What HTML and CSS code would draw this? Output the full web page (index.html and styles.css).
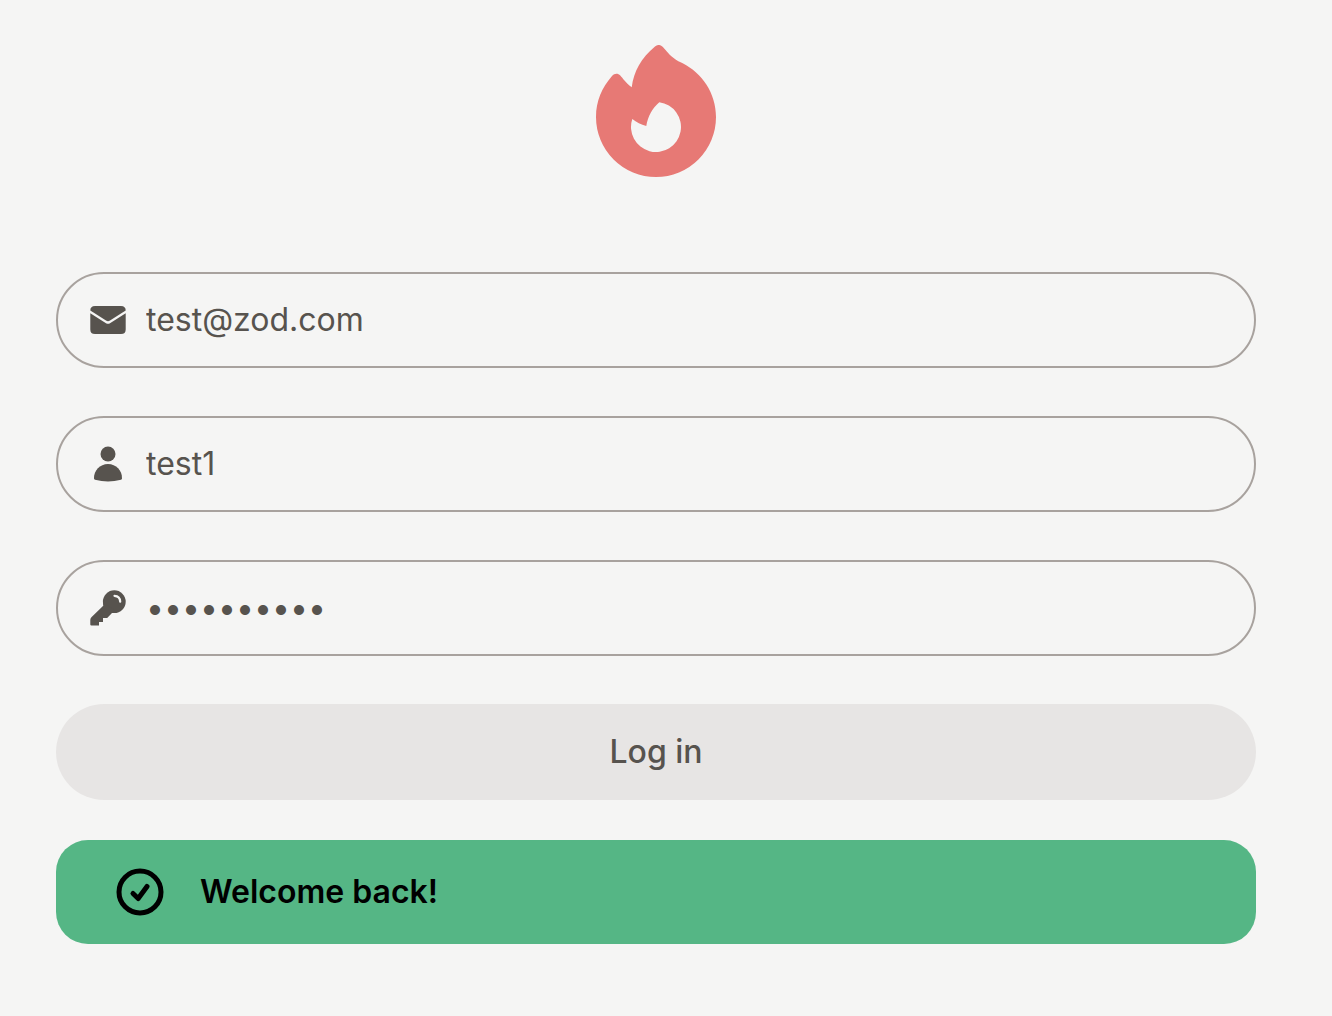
FILE: index.html
```html
<!DOCTYPE html>
<html lang="en">
<head>
  <meta charset="utf-8">
  <meta name="viewport" content="width=device-width, initial-scale=1">
  <title>Log in</title>
  <link rel="stylesheet" href="styles.css">
</head>
<body>
  <main class="page">
    <svg class="logo" viewBox="0 0 120 132" aria-hidden="true">
      <path fill-rule="evenodd" d="M59 1.6C61.5-.6 64-.5 66.300 1.400C69 4 72 8.500 77.300 12.700C81 15.600 84 17 86.700 18.200C106 28 120 48 120 72A60 60 0 0 1 0 72C0 56 6 42.500 16 31C18.500 28 22 28 24.300 30.500C27 33.500 29 37 35.700 42.300C38 26 45 13.500 59 1.600ZM36.300 74A25 25 0 1 0 63.300 57.200C56 63.500 51.800 71.500 50.300 81C45 79.500 40.500 77.300 36.300 74Z"/>
    </svg>

    <form class="form">
      <label class="field">
        <svg class="field-icon" viewBox="0 0 40 40" aria-hidden="true">
          <path d="M7 6H33Q37.700 6 37.700 10.500L22 20.600Q20 21.800 18 20.600L2.300 10.500Q2.300 6 7 6Z"/>
          <path d="M2.300 13.300L18 23.200Q20 24.400 22 23.200L37.700 13.300V29.500Q37.700 34 33 34H7Q2.300 34 2.300 29.500Z"/>
        </svg>
        <input class="field-input" type="email" aria-label="Email" value="test@zod.com">
      </label>
      <label class="field">
        <svg class="field-icon" viewBox="0 0 40 40" aria-hidden="true">
          <circle cx="20" cy="10" r="7.500"/>
          <path d="M6 34.500C5.700 26.500 12 20 20 20S34.300 26.500 34 34.500Q33.900 35.300 33 35.700Q20 39.300 7 35.700Q6.100 35.300 6 34.500Z"/>
        </svg>
        <input class="field-input" type="text" aria-label="Username" value="test1">
      </label>
      <label class="field">
        <svg class="field-icon" viewBox="0 0 40 40" aria-hidden="true">
          <circle cx="26.300" cy="13.700" r="11.400"/>
          <path d="M15 15L15.500 17.500L3.400 29.200Q2.300 30.300 2.300 32V36.500Q2.300 37.600 3.400 37.600H11V34H15V30H19.200L24 25L27 22Z"/>
          <path class="key-glint" d="M26.500 7.900Q32 8.200 32.200 13.700"/>
        </svg>
        <input class="field-input" type="password" aria-label="Password" value="abcdefghij">
      </label>
      <button class="submit" type="button">Log in</button>
    </form>

    <div class="alert" role="status">
      <svg class="alert-icon" viewBox="0 0 48 48" aria-hidden="true">
        <circle cx="24" cy="24" r="21"/>
        <path d="M17 25.500L22.200 30.500L31 18.500"/>
      </svg>
      <span>Welcome back!</span>
    </div>
  </main>
</body>
</html>
```
FILE: styles.css
```css
*,
*::before,
*::after {
  box-sizing: border-box;
}

body {
  margin: 0;
  background: #f5f5f4;
  color: #57534e;
  font-family: Inter, "Liberation Sans", sans-serif;
  font-size: 32px;
  line-height: 40px;
}

.page {
  display: flex;
  flex-direction: column;
  padding: 45px 76px 72px 56px;
}

.logo {
  align-self: center;
  width: 120px;
  height: 132px;
  margin-bottom: 95px;
  fill: #e77975;
}

.form {
  display: flex;
  flex-direction: column;
  gap: 48px;
}

.field {
  display: flex;
  align-items: center;
  gap: 18px;
  height: 96px;
  padding: 0 30px;
  border: 2px solid #a8a29e;
  border-radius: 48px;
}

.field-icon {
  flex: none;
  width: 40px;
  height: 40px;
  fill: #57534e;
}

.key-glint {
  fill: none;
  stroke: #f5f5f4;
  stroke-width: 2.2;
  stroke-linecap: round;
}

.field-input {
  flex: 1;
  min-width: 0;
  padding: 0;
  border: 0;
  outline: 0;
  background: transparent;
  color: inherit;
  font: inherit;
}

.submit {
  height: 96px;
  padding: 0 32px;
  border: 0;
  border-radius: 48px;
  background: #e7e5e4;
  color: inherit;
  font: inherit;
  font-weight: 500;
}

.alert {
  display: flex;
  align-items: center;
  gap: 36px;
  margin-top: 40px;
  padding: 28px 60px;
  border-radius: 32px;
  background: #55b685;
  color: #000;
  font-weight: 600;
}

.alert-icon {
  flex: none;
  width: 48px;
  height: 48px;
  fill: none;
  stroke: currentColor;
  stroke-width: 5;
  stroke-linecap: round;
  stroke-linejoin: round;
}
```
